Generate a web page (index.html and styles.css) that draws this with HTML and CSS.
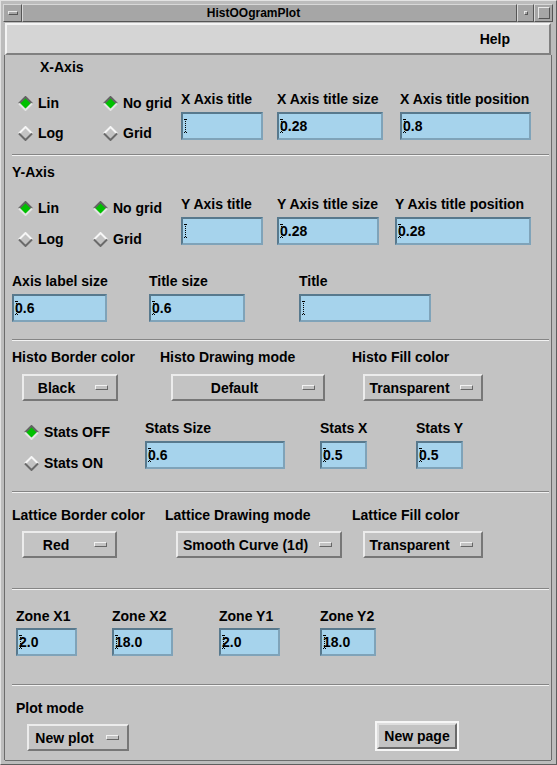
FILE: index.html
```html
<!DOCTYPE html>
<html>
<head>
<meta charset="utf-8">
<title>HistOOgramPlot</title>
<link rel="stylesheet" href="styles.css">
</head>
<body>
<div class="win">
  <div class="titlebar">
    <div class="tb-btn tb-menu"><span class="tb-bar"></span></div>
    <div class="tb-title">HistOOgramPlot</div>
    <div class="tb-btn tb-min"><span class="tb-dot"></span></div>
    <div class="tb-btn tb-max"><span class="tb-sq"></span></div>
  </div>
  <div class="menubar"><span class="menu-item">Help</span></div>
  <div class="body">

    <div class="heading h-x">X-Axis</div>
    <div class="row row-x">
      <div class="radios rc-x1 gap14">
        <div class="radio on"><svg class="dia" viewBox="0 0 15 15"><polygon points="7.5,1 14,7.5 7.5,14 1,7.5" class="dfill"/><polyline points="1,7.5 7.5,1 14,7.5" class="dtop"/><polyline points="1,7.5 7.5,14 14,7.5" class="dbot"/></svg><span>Lin</span></div>
        <div class="radio"><svg class="dia" viewBox="0 0 15 15"><polygon points="7.5,1 14,7.5 7.5,14 1,7.5" class="dfill"/><polyline points="1,7.5 7.5,1 14,7.5" class="dtop"/><polyline points="1,7.5 7.5,14 14,7.5" class="dbot"/></svg><span>Log</span></div>
      </div>
      <div class="radios rc-x2 gap14">
        <div class="radio on"><svg class="dia" viewBox="0 0 15 15"><polygon points="7.5,1 14,7.5 7.5,14 1,7.5" class="dfill"/><polyline points="1,7.5 7.5,1 14,7.5" class="dtop"/><polyline points="1,7.5 7.5,14 14,7.5" class="dbot"/></svg><span>No grid</span></div>
        <div class="radio"><svg class="dia" viewBox="0 0 15 15"><polygon points="7.5,1 14,7.5 7.5,14 1,7.5" class="dfill"/><polyline points="1,7.5 7.5,1 14,7.5" class="dtop"/><polyline points="1,7.5 7.5,14 14,7.5" class="dbot"/></svg><span>Grid</span></div>
      </div>
      <div class="field fw96"><div class="lbl">X Axis title</div><div class="input iw82"><span class="caret"></span></div></div>
      <div class="field fw123"><div class="lbl">X Axis title size</div><div class="input iw106"><span class="caret"></span>0.28</div></div>
      <div class="field"><div class="lbl">X Axis title position</div><div class="input iw131"><span class="caret"></span>0.8</div></div>
    </div>
    <div class="sep sep1"></div>

    <div class="heading h-y">Y-Axis</div>
    <div class="row row-y">
      <div class="radios rc-y1 gap15">
        <div class="radio on"><svg class="dia" viewBox="0 0 15 15"><polygon points="7.5,1 14,7.5 7.5,14 1,7.5" class="dfill"/><polyline points="1,7.5 7.5,1 14,7.5" class="dtop"/><polyline points="1,7.5 7.5,14 14,7.5" class="dbot"/></svg><span>Lin</span></div>
        <div class="radio"><svg class="dia" viewBox="0 0 15 15"><polygon points="7.5,1 14,7.5 7.5,14 1,7.5" class="dfill"/><polyline points="1,7.5 7.5,1 14,7.5" class="dtop"/><polyline points="1,7.5 7.5,14 14,7.5" class="dbot"/></svg><span>Log</span></div>
      </div>
      <div class="radios rc-y2 gap15">
        <div class="radio on"><svg class="dia" viewBox="0 0 15 15"><polygon points="7.5,1 14,7.5 7.5,14 1,7.5" class="dfill"/><polyline points="1,7.5 7.5,1 14,7.5" class="dtop"/><polyline points="1,7.5 7.5,14 14,7.5" class="dbot"/></svg><span>No grid</span></div>
        <div class="radio"><svg class="dia" viewBox="0 0 15 15"><polygon points="7.5,1 14,7.5 7.5,14 1,7.5" class="dfill"/><polyline points="1,7.5 7.5,1 14,7.5" class="dtop"/><polyline points="1,7.5 7.5,14 14,7.5" class="dbot"/></svg><span>Grid</span></div>
      </div>
      <div class="field fw96"><div class="lbl">Y Axis title</div><div class="input iw82"><span class="caret"></span></div></div>
      <div class="field fw118"><div class="lbl">Y Axis title size</div><div class="input iw102"><span class="caret"></span>0.28</div></div>
      <div class="field"><div class="lbl">Y Axis title position</div><div class="input iw136"><span class="caret"></span>0.28</div></div>
    </div>

    <div class="row row-axis">
      <div class="field fw137"><div class="lbl">Axis label size</div><div class="input iw95"><span class="caret"></span>0.6</div></div>
      <div class="field fw150"><div class="lbl">Title size</div><div class="input iw96"><span class="caret"></span>0.6</div></div>
      <div class="field"><div class="lbl">Title</div><div class="input iw132"><span class="caret"></span></div></div>
    </div>
    <div class="sep sep2"></div>

    <div class="row row-histo">
      <div class="field fw148"><div class="lbl">Histo Border color</div><div class="opt ow96 om10"><span class="otxt">Black</span><span class="ind"></span></div></div>
      <div class="field fw192"><div class="lbl">Histo Drawing mode</div><div class="opt ow154 om11"><span class="otxt">Default</span><span class="ind"></span></div></div>
      <div class="field"><div class="lbl">Histo Fill color</div><div class="opt ow120 om11"><span class="otxt">Transparent</span><span class="ind"></span></div></div>
    </div>

    <div class="row row-stats">
      <div class="radios rc-stats gap15">
        <div class="radio on"><svg class="dia" viewBox="0 0 15 15"><polygon points="7.5,1 14,7.5 7.5,14 1,7.5" class="dfill"/><polyline points="1,7.5 7.5,1 14,7.5" class="dtop"/><polyline points="1,7.5 7.5,14 14,7.5" class="dbot"/></svg><span>Stats OFF</span></div>
        <div class="radio"><svg class="dia" viewBox="0 0 15 15"><polygon points="7.5,1 14,7.5 7.5,14 1,7.5" class="dfill"/><polyline points="1,7.5 7.5,1 14,7.5" class="dtop"/><polyline points="1,7.5 7.5,14 14,7.5" class="dbot"/></svg><span>Stats ON</span></div>
      </div>
      <div class="field fw175"><div class="lbl">Stats Size</div><div class="input iw140"><span class="caret"></span>0.6</div></div>
      <div class="field fw96"><div class="lbl">Stats X</div><div class="input iw47"><span class="caret"></span>0.5</div></div>
      <div class="field"><div class="lbl">Stats Y</div><div class="input iw47"><span class="caret"></span>0.5</div></div>
    </div>
    <div class="sep sep3"></div>

    <div class="row row-lattice">
      <div class="field fw153"><div class="lbl">Lattice Border color</div><div class="opt ow95 om10"><span class="otxt">Red</span><span class="ind"></span></div></div>
      <div class="field fw187"><div class="lbl">Lattice Drawing mode</div><div class="opt ow166 om11"><span class="otxt">Smooth Curve (1d)</span><span class="ind"></span></div></div>
      <div class="field"><div class="lbl">Lattice Fill color</div><div class="opt ow120 om11"><span class="otxt">Transparent</span><span class="ind"></span></div></div>
    </div>
    <div class="sep sep4"></div>

    <div class="row row-zone">
      <div class="field fw96"><div class="lbl">Zone X1</div><div class="input iw61 zin"><span class="caret"></span>2.0</div></div>
      <div class="field fw107"><div class="lbl">Zone X2</div><div class="input iw61 zin"><span class="caret"></span>18.0</div></div>
      <div class="field fw101"><div class="lbl">Zone Y1</div><div class="input iw61 zin"><span class="caret"></span>2.0</div></div>
      <div class="field"><div class="lbl">Zone Y2</div><div class="input iw56 zin"><span class="caret"></span>18.0</div></div>
    </div>
    <div class="sep sep5"></div>

    <div class="lbl plot-lbl">Plot mode</div>
    <div class="row row-plot">
      <div class="opt ow102"><span class="otxt">New plot</span><span class="ind"></span></div>
      <div class="ring"><div class="pbtn">New page</div></div>
    </div>
  </div>
</div>
</body>
</html>
```

FILE: styles.css
```css
html, body {
  margin: 0;
  padding: 0;
}
body {
  width: 557px;
  height: 765px;
  overflow: hidden;
  background: #bdbdbd;
  font: bold 14px/16px "Liberation Sans", Arial, sans-serif;
  color: #000;
}
.win {
  box-sizing: border-box;
  width: 557px;
  height: 765px;
  padding: 3px 5px 4px 4px;
  background: #bcbcbc;
  border: 1px solid;
  border-color: #e2e2e2 #5e5e5e #5e5e5e #e2e2e2;
  display: flex;
  flex-direction: column;
}

/* title bar */
.titlebar {
  display: flex;
  height: 18px;
  margin: 0 -2px 1px -2px;
  background: #a6a6a6;
}
.tb-btn {
  box-sizing: border-box;
  height: 18px;
  border: 1px solid;
  border-color: #d8d8d8 #555 #555 #d8d8d8;
  display: flex;
  align-items: center;
  justify-content: center;
  background: #a6a6a6;
}
.tb-menu { width: 19px; }
.tb-min { width: 17px; }
.tb-max { width: 19px; }
.tb-bar {
  box-sizing: border-box;
  width: 10px;
  height: 4px;
  border: 1px solid;
  border-color: #e8e8e8 #555 #555 #e8e8e8;
}
.tb-dot {
  box-sizing: border-box;
  width: 4px;
  height: 4px;
  border: 1px solid;
  border-color: #e8e8e8 #555 #555 #e8e8e8;
}
.tb-sq {
  box-sizing: border-box;
  width: 12px;
  height: 12px;
  border: 1px solid;
  border-color: #e8e8e8 #555 #555 #e8e8e8;
}
.tb-title {
  flex: 1;
  box-sizing: border-box;
  height: 18px;
  border: 1px solid;
  border-color: #d8d8d8 #555 #555 #d8d8d8;
  text-align: center;
  font-size: 12px;
  line-height: 16px;
  padding-right: 32px;
}

/* menubar */
.menubar {
  box-sizing: border-box;
  height: 32px;
  background: #d5d5d5;
  border: 2px solid;
  border-color: #f4f4f4 #808080 #808080 #f4f4f4;
  display: flex;
  align-items: center;
  justify-content: flex-end;
  padding-right: 39px;
}

/* body */
.body {
  flex: 1;
  background: #c3c3c3;
  display: flex;
  flex-direction: column;
  align-items: flex-start;
  box-shadow: -1px 0 0 #6c6c6c, 1px 0 0 #6c6c6c, 0 1px 0 #6c6c6c;
}
.heading { height: 16px; }
.h-x { margin: 4px 0 0 35px; }
.h-y { margin: 8px 0 0 7px; }

.row {
  display: flex;
  align-items: flex-start;
}
.row-x { margin: 16px 0 0 13px; }
.row-y { margin: 16px 0 0 13px; }
.row-axis { margin: 26px 0 0 7px; }
.row-histo { margin: 8px 0 0 7px; }
.row-stats { margin: 19px 0 0 19px; }
.row-lattice { margin: 14px 0 0 7px; }
.row-zone { margin: 18px 0 0 11px; }
.plot-lbl { margin: 14px 0 0 11px; }
.row-plot { margin: 5px 0 0 22px; align-items: flex-end; }

/* separators */
.sep {
  width: 537px;
  height: 0;
  margin-left: 7px;
  border-top: 1px solid #858585;
  border-bottom: 1px solid #f2f2f2;
}
.sep1 { margin-top: 13px; }
.sep2 { margin-top: 17px; }
.sep3 { margin-top: 20px; }
.sep4 { margin-top: 30px; }
.sep5 { margin-top: 28px; }

/* radios */
.radios {
  display: flex;
  flex-direction: column;
  margin-top: 4px;
}
.gap14 { gap: 14px; }
.gap15 { gap: 15px; }
.rc-x1 { width: 85px; }
.rc-x2 { width: 78px; }
.rc-y1 { width: 75px; }
.rc-y2 { width: 88px; }
.rc-stats { width: 121px; }
.radio {
  display: flex;
  align-items: center;
  height: 16px;
  gap: 5px;
  white-space: nowrap;
}
.dia {
  width: 15px;
  height: 15px;
  flex: none;
}
.dfill { fill: none; }
.dtop { fill: none; stroke: #f6f6f6; stroke-width: 2; }
.dbot { fill: none; stroke: #6a6a6a; stroke-width: 2; }
.radio.on .dfill { fill: #00c000; }
.radio.on .dtop { stroke: #636363; }
.radio.on .dbot { stroke: #e4e4e4; }

/* fields */
.field {
  display: flex;
  flex-direction: column;
  align-items: flex-start;
}
.lbl {
  height: 16px;
  white-space: nowrap;
}
.fw96 { width: 96px; }
.fw101 { width: 101px; }
.fw107 { width: 107px; }
.fw118 { width: 118px; }
.fw123 { width: 123px; }
.fw137 { width: 137px; }
.fw148 { width: 148px; }
.fw150 { width: 150px; }
.fw153 { width: 153px; }
.fw175 { width: 175px; }
.fw187 { width: 187px; }
.fw192 { width: 192px; }

.input {
  position: relative;
  box-sizing: border-box;
  height: 28px;
  margin-top: 5px;
  background: #a6d3ec;
  border: 2px solid;
  border-color: #58798d #7fa3b9 #7fa3b9 #58798d;
  padding-left: 1px;
  line-height: 24px;
  white-space: nowrap;
  overflow: hidden;
}
.zin { margin-top: 4px; }
.caret {
  position: absolute;
  left: 1px;
  top: 5px;
  width: 3px;
  height: 14px;
}
.caret::before {
  content: "";
  position: absolute;
  left: 1px;
  top: 0;
  width: 1px;
  height: 14px;
  background: repeating-linear-gradient(#000 0 1px, transparent 1px 2px);
}
.caret::after {
  content: "";
  position: absolute;
  left: 0;
  top: 0;
  width: 3px;
  height: 14px;
  border-top: 1px dotted #000;
  border-bottom: 1px dotted #000;
  box-sizing: border-box;
}
.iw47 { width: 47px; }
.iw56 { width: 56px; }
.iw61 { width: 61px; }
.iw82 { width: 82px; }
.iw95 { width: 95px; }
.iw96 { width: 96px; }
.iw102 { width: 102px; }
.iw106 { width: 106px; }
.iw131 { width: 131px; }
.iw132 { width: 132px; }
.iw136 { width: 136px; }
.iw140 { width: 140px; }

/* option menus */
.opt {
  box-sizing: border-box;
  height: 27px;
  display: flex;
  align-items: center;
  background: #c3c3c3;
  border: 2px solid;
  border-color: #ececec #777 #777 #ececec;
  white-space: nowrap;
}
.field .opt { margin-top: 9px; }
.row-lattice .field .opt { margin-top: 8px; }
.otxt {
  flex: 1;
  text-align: center;
}
.ind {
  box-sizing: border-box;
  width: 13px;
  height: 5px;
  margin: 0 8px 0 6px;
  border: 1px solid;
  border-color: #f2f2f2 #666 #666 #f2f2f2;
  flex: none;
}
.om10 { margin-left: 10px; }
.om11 { margin-left: 11px; }
.ow95 { width: 95px; }
.ow96 { width: 96px; }
.ow102 { width: 102px; }
.ow120 { width: 120px; }
.ow154 { width: 154px; }
.ow166 { width: 166px; }

/* default push button */
.ring {
  box-sizing: border-box;
  width: 84px;
  height: 30px;
  margin-left: 246px;
  border: 2px solid #f6f6f6;
}
.pbtn {
  box-sizing: border-box;
  height: 26px;
  border: 2px solid;
  border-color: #dedede #6a6a6a #6a6a6a #dedede;
  background: #c3c3c3;
  text-align: center;
  line-height: 22px;
}
```
